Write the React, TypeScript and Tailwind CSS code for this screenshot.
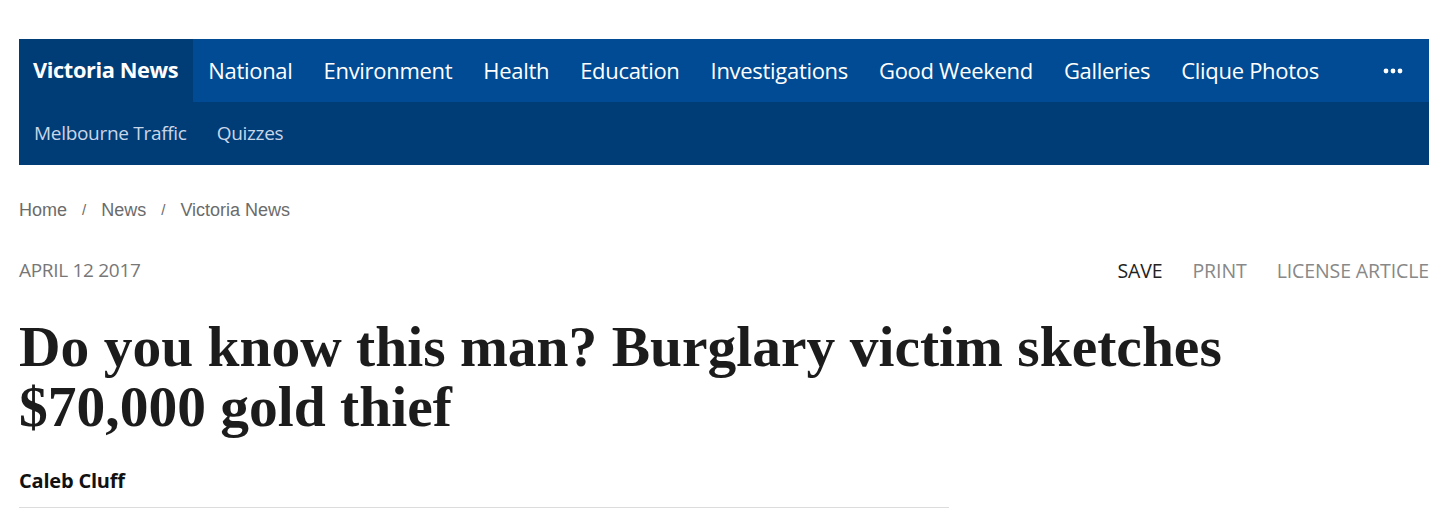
import React from "react";

const navTop = ["National", "Environment", "Health", "Education", "Investigations", "Good Weekend", "Galleries", "Clique Photos"];

export default function App() {
  return (
    <div className="w-[1439px] h-[513px] overflow-hidden bg-white">
      <div className="px-[19px] pt-[39px] w-[1439px]">
        <nav className="w-[1410px] font-['Open_Sans',sans-serif]">
          <div className="flex h-[63px] bg-[#004b93] items-stretch">
            <div className="bg-[#003c76] px-[14px] pr-[15px] flex items-center text-white font-bold text-[21.8px] tracking-[-0.4px]">Victoria News</div>
            <div className="flex items-center gap-[31px] pl-[15px] text-white text-[22px] tracking-[-0.3px]">
              {navTop.map((n) => (
                <span key={n}>{n}</span>
              ))}
            </div>
            <div className="ml-auto flex items-center pr-[26px] text-white">
              <svg width="20" height="6" viewBox="0 0 20 6">
                <circle cx="3" cy="3" r="2.4" fill="white" />
                <circle cx="10" cy="3" r="2.4" fill="white" />
                <circle cx="17" cy="3" r="2.4" fill="white" />
              </svg>
            </div>
          </div>
          <div className="flex h-[63px] bg-[#003c76] items-center gap-[30px] px-[15px] text-[#c9d6e8] text-[19px] tracking-[-0.3px]">
            <span>Melbourne Traffic</span>
            <span>Quizzes</span>
          </div>
        </nav>
        <div className="mt-[32px] flex items-center gap-[15px] font-['Liberation_Sans',Arial,sans-serif] text-[18px] text-[#6b6b6b]">
          <span>Home</span>
          <span className="text-[15px]">/</span>
          <span>News</span>
          <span className="text-[15px]">/</span>
          <span>Victoria News</span>
        </div>
        <div className="mt-[32px] flex items-center w-[1410px] font-['Open_Sans',sans-serif] tracking-[-0.3px]">
          <span className="text-[#777] text-[19px]">APRIL 12 2017</span>
          <div className="ml-auto flex gap-[30px] text-[19.5px] tracking-[-0.1px]">
            <span className="text-[#222]">SAVE</span>
            <span className="text-[#888]">PRINT</span>
            <span className="text-[#888]">LICENSE ARTICLE</span>
          </div>
        </div>
        <h1 className="mt-[32px] font-['Liberation_Serif',serif] font-bold text-[57.5px] leading-[60px] text-[#1c1c1c] w-[1260px]">
          Do you know this man? Burglary victim sketches $70,000 gold thief
        </h1>
        <div className="mt-[29px] font-['Open_Sans',sans-serif] font-bold text-[20px] text-[#111] tracking-[-0.2px]">Caleb Cluff</div>
        <div className="mt-[11px] w-[930px] border-t border-[#dcdcdc]"></div>
      </div>
    </div>
  );
}
